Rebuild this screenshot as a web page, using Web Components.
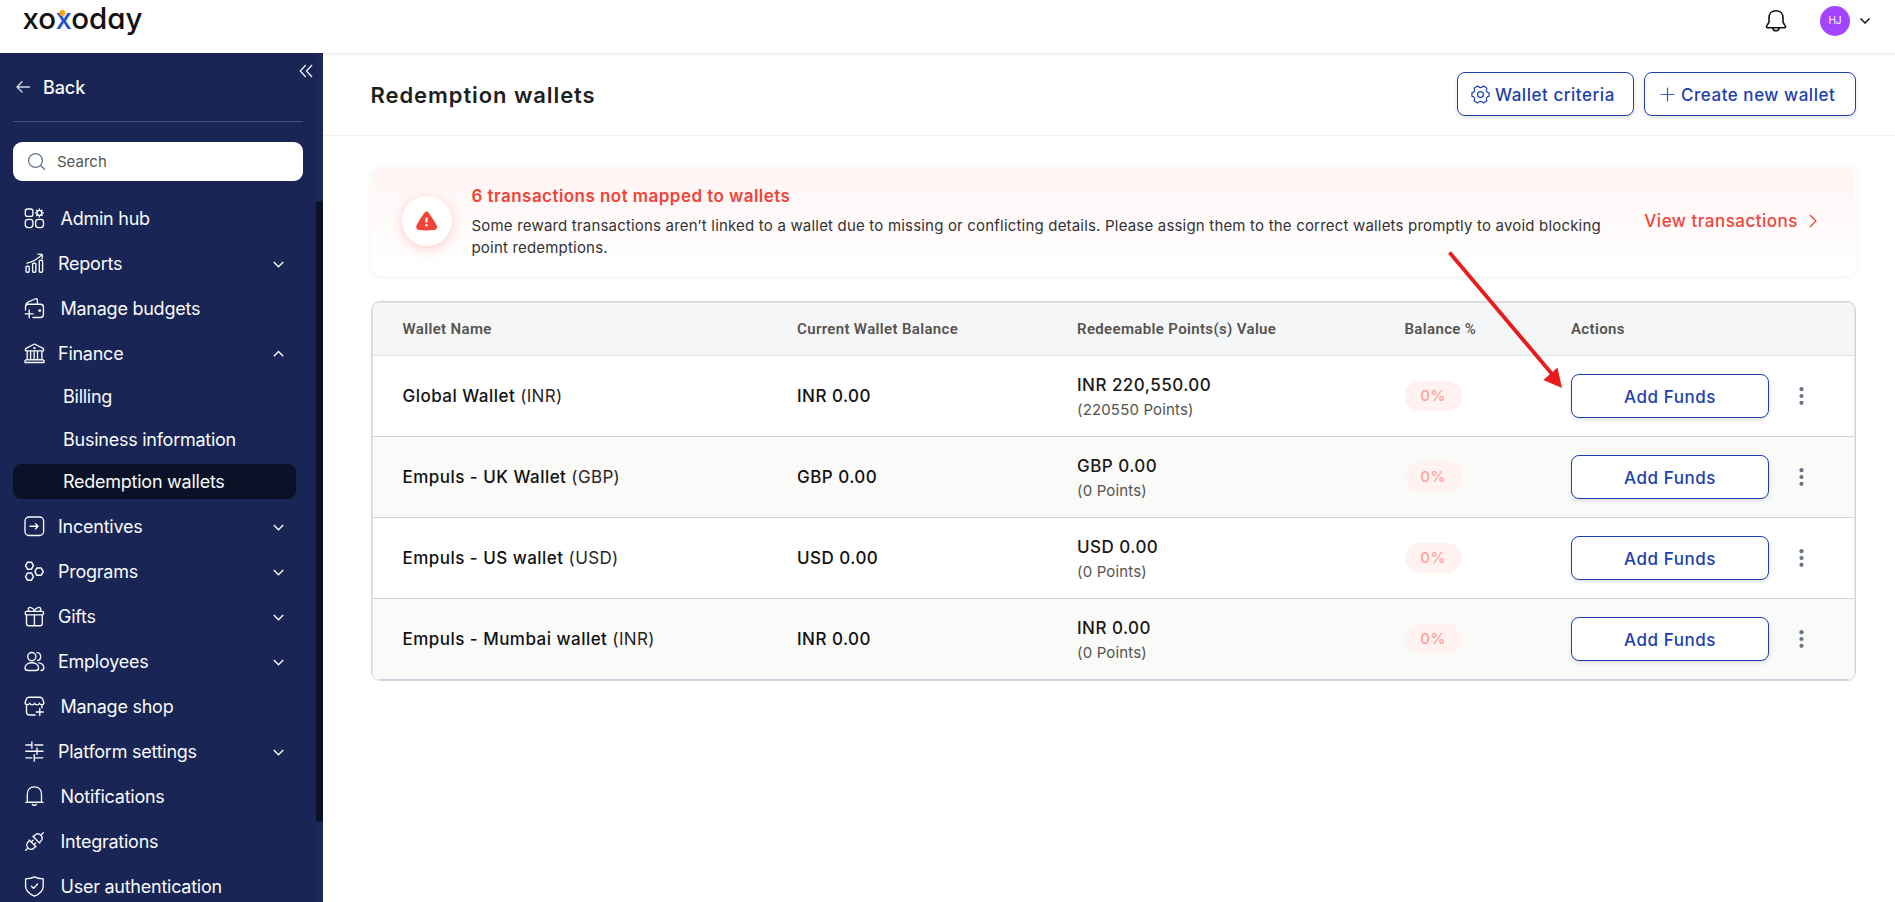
<!DOCTYPE html>
<html lang="en">
<head>
<meta charset="utf-8">
<title>Redemption wallets</title>
<style>
body{
  margin:0;
  height:902px;
  overflow:hidden;
  background:#fff;
  font-family:Inter,"Liberation Sans",sans-serif;
  color:#1c1917;
}
</style>
</head>
<body>
<app-shell>
  <top-bar slot="top" initials="HJ"></top-bar>
  <side-bar slot="side">
    <nav-item icon="hub">Admin hub</nav-item>
    <nav-item icon="reports" arrow="down">Reports</nav-item>
    <nav-item icon="budget">Manage budgets</nav-item>
    <nav-item icon="bank" arrow="up">Finance
      <sub-item slot="sub">Billing</sub-item>
      <sub-item slot="sub">Business information</sub-item>
      <sub-item slot="sub" active>Redemption wallets</sub-item>
    </nav-item>
    <nav-item icon="incentive" arrow="down">Incentives</nav-item>
    <nav-item icon="programs" arrow="down">Programs</nav-item>
    <nav-item icon="gift" arrow="down">Gifts</nav-item>
    <nav-item icon="people" arrow="down">Employees</nav-item>
    <nav-item icon="shop">Manage shop</nav-item>
    <nav-item icon="sliders" arrow="down">Platform settings</nav-item>
    <nav-item icon="bell">Notifications</nav-item>
    <nav-item icon="plug">Integrations</nav-item>
    <nav-item icon="shield">User authentication</nav-item>
  </side-bar>
  <page-header>Redemption wallets
    <line-button slot="actions" icon="gear" style="width:177px">Wallet criteria</line-button>
    <line-button slot="actions" icon="plus" style="width:212px">Create new wallet</line-button>
  </page-header>
  <alert-card>
    <span slot="title">6 transactions not mapped to wallets</span>
    <span slot="text">Some reward transactions aren’t linked to a wallet due to missing or conflicting details. Please assign them to the correct wallets promptly to avoid blocking point redemptions.</span>
    <span slot="link">View transactions</span>
  </alert-card>
  <wallet-table>
    <wallet-row name="Global Wallet" currency="INR" balance="0.00" value="220,550.00" points="220550"></wallet-row>
    <wallet-row name="Empuls - UK Wallet" currency="GBP" balance="0.00" value="0.00" points="0" alt></wallet-row>
    <wallet-row name="Empuls - US wallet" currency="USD" balance="0.00" value="0.00" points="0"></wallet-row>
    <wallet-row name="Empuls - Mumbai wallet" currency="INR" balance="0.00" value="0.00" points="0" alt></wallet-row>
  </wallet-table>
</app-shell>
<pointer-arrow></pointer-arrow>

<script>
/* Icons, all on a 21x21 grid */
const Icons = {
  hub:`<rect x="1.3" y="1" width="7.6" height="7.4" rx="2.2"/><rect x="1.3" y="11.4" width="7.6" height="8.2" rx="2.8"/><rect x="11.6" y="11.4" width="7.9" height="8.2" rx="2.8"/><circle cx="15.4" cy="4.9" r="2.5"/><path d="M15.4 1v1.4M15.4 7.4v1.5M11.5 4.9h1.4M17.9 4.9h1.5M12.7 2.2l1 1M17.1 6.6l1 1M18.1 2.2l-1 1M13.7 6.6l-1 1"/>`,
  reports:`<rect x="2" y="13.2" width="3.2" height="6" rx="1"/><rect x="8.6" y="10.2" width="3.3" height="9" rx="1"/><rect x="15.3" y="7.2" width="3.3" height="12" rx="1"/><path d="M3 10.200c6.300-1.500 11-4.500 14.700-8.300M14 1.200l4.200.2v4.200"/>`,
  budget:`<path d="M1.500 12V8.800c0-1.600 1-2.600 2.600-2.600h12.300c1.900 0 3 1 3 2.800v7.500c0 2-1.200 3-3 3H9M1.600 8.500C1.600 6 2.500 5 4 4.200L11 1c1.500-.7 2.400 0 2.400 1.400v3.600M5.200 12v7.800M1.200 15.800h8"/><circle cx="15.700" cy="12.600" r=".8"/>`,
  bank:`<path d="M1.500 7.800V5.600L10.500 1l9 4.600v2.200zM1 19.500v-2l1.500-.8h16l1.500.8v2zM3.200 8v8.600M6.600 8v8.600M13.500 8v8.600M10.100 8v8.600M17.900 8v8.600"/><circle cx="10.500" cy="5.100" r=".5"/>`,
  incentive:`<rect x="1" y="1" width="18.600" height="18.500" rx="4"/><path d="M6 10.200h8M11.500 7.700l2.600 2.500-2.600 2.500"/>`,
  programs:`<path d="M3.500 1.200h4l1.900 3.500-1.900 3.500h-4L1.600 4.700zM3.500 12h4l1.900 3.600-1.900 3.600h-4l-1.900-3.600zM12.900 6.900h4.200l2.200 3.700-2.200 3.700h-4.200l-2-3.700z" stroke-width="1.500"/>`,
  gift:`<rect x="1.300" y="5.300" width="18.200" height="3.500" rx="1"/><path d="M2.500 9v8.500c0 1.500.8 2.200 2.200 2.200h11.400c1.400 0 2.200-.7 2.200-2.200V9M10.400 9v10.500M10.500 5c-1-3.600-6-5-6.300-1.800 0 .9.400 1.500 1.200 2M10.500 5c1-3.600 6-5 6.300-1.800 0 .9-.4 1.500-1.200 2"/>`,
  people:`<circle cx="7.800" cy="5.600" r="4.100"/><path d="M1 17c0-7 13.600-7 13.600 0 0 2.500-1.600 2.500-3 2.500H4c-1.400 0-3 0-3-2.500zM13 1.700c4.700.3 4.800 7 .5 7.800M15 11.800c3 .5 4.800 2.500 4.800 5 0 1.800-1 2.700-2.800 2.700"/>`,
  shop:`<path d="M1.200 6.300L2.500 2.800C3 1.500 3.700 1.200 5 1.200h11c1.300 0 2 .3 2.500 1.600l1.300 3.500c.3 2.800-3.500 3.400-4.400.8-.8 2.300-4 2.300-4.800 0-.8 2.300-4 2.300-4.800 0-1 2.600-4.900 2-4.600-.8M2.500 9.500v6.300c0 2.300 1 3.200 3.200 3.200h5.500M18 9.500v2.300M15.800 12.500v7M12.300 16h7"/>`,
  sliders:`<path d="M1.800 4h6M7.900.8v6.400M10.800 4h8M1.800 10.200h11M13 7v6.400M13 10.200h6M1.800 16.800h6M10.200 13.600v6.600M10.200 16.800h8.700"/>`,
  bell:`<path d="M3.300 16.200V8.800C3.300 3.800 6 .9 10.300.9s7.200 2.900 7.200 7.900v7.400zM1.800 16.300h17.300M8.300 18.500c.9 1 3.200 1 4.100 0"/>`,
  plug:`<g transform="rotate(-45 10.500 10.500)"><path d="M-2 10.500h3.500M19.500 10.500h3.500M7.800 5.700v9.600M7.800 6.300H6C-.2 6.300-.2 14.700 6 14.700h1.800M7.900 8.600h2.400M7.900 12.400h2.400M13 5.700v9.600M13 6.300h1.800c6.200 0 6.200 8.400 0 8.400H13"/></g>`,
  shield:`<path d="M10.500.9c2.500 1.500 5.500 1.900 8.700 2v7.300c0 4.700-3.700 7.800-8.700 10-5-2.200-8.900-5.300-8.900-10V2.900c3.200-.1 6.300-.5 8.900-2zM7.400 10.300l2.200 2.100 4-4.400"/>`,
  gear:`<path d="M19.100 8.800v3.400Q17 12.500 16.500 14q-.5 1.500.4 2.700l-3.300 2.300Q12 17.400 10.500 17.400T7.400 19l-3.300-2.300q.9-1.200.4-2.700-.5-1.500-2.600-1.800V8.800Q4 8.500 4.500 7q.5-1.500-.4-2.700L7.400 2Q9 3.600 10.500 3.600T13.600 2l3.300 2.300Q16 5.500 16.500 7q.5 1.500 2.600 1.800z"/><circle cx="10.500" cy="10.500" r="2.900"/>`,
  plus:`<path d="M10.500 4v13M4 10.500h13"/>`
};
const icon = (name, size = 21, width = 1.35) =>
  `<svg width="${size}" height="${size}" viewBox="0 0 21 21" fill="none" stroke="currentColor" stroke-width="${width}" stroke-linecap="round" stroke-linejoin="round">${Icons[name]}</svg>`;

function define(name, render){
  window.customElements.define(name, class extends HTMLElement{
    constructor(){
      super();
      this.attachShadow({mode:'open'});
    }
    connectedCallback(){
      this.shadowRoot.innerHTML = render(this);
    }
  });
}

define('app-shell', () => `
<style>
:host{display:grid;grid-template:53px 849px / 323px 1fr;}
.top{grid-column:1 / 3;position:relative;z-index:1;}
main{min-width:0;}
</style>
<div class="top"><slot name="top"></slot></div>
<slot name="side"></slot>
<main><slot></slot></main>
`);

define('top-bar', el => `
<style>
:host{display:flex;justify-content:space-between;box-sizing:border-box;height:53px;padding:0 25px 0 22px;background:#fff;}
:host::after{content:"";position:absolute;left:323px;right:0;top:53px;height:4px;background:linear-gradient(#f0f0f0,#fff);}
.user{display:flex;align-items:center;height:42px;}
.avatar{width:30px;height:30px;border-radius:50%;background:#a344ff;color:#fff;font-size:10px;line-height:29px;text-align:center;margin:0 10px 0 33px;}
svg{display:block;}
</style>
<svg width="124" height="42" font-family="Inter" font-size="29.500" font-weight="480" style="font-feature-settings:'cv11'">
  <text y="29" x="0.500" textLength="120" lengthAdjust="spacing" fill="#111">xo<tspan fill="#1d4fd8">x</tspan>oday</text>
  <circle cx="40.300" cy="13" r="2.900" fill="#f5a80c"/>
</svg>
<div class="user">
  <svg width="22" height="24" viewBox="0 0 22 24" fill="none" stroke="#111" stroke-width="1.600" stroke-linejoin="round"><path d="M11 1.800c-4.500 0-7 3-7 7v4.400l-2.300 4c-.4.900 0 1.500.8 1.500h17c.8 0 1.200-.6.8-1.500l-2.300-4V8.800c0-4-2.500-7-7-7zM7.700 18.900c.6 3.900 6 3.900 6.600 0"/></svg>
  <div class="avatar">${el.getAttribute('initials')}</div>
  <svg width="10" height="8" fill="none" stroke="#111" stroke-width="1.500"><path d="M.5 1.500L5 6l4.500-4.500"/></svg>
</div>
`);

define('side-bar', () => `
<style>
:host{display:flex;background:#192554;color:#f8fafc;overflow:hidden;}
.menu{width:316px;flex:none;}
.head{display:flex;justify-content:space-between;height:68px;padding:0 3px 0 15px;}
.back{display:flex;align-items:center;gap:12px;font-size:18px;font-weight:500;letter-spacing:-.1px;}
.head > svg{margin-top:11px;}
.search{display:flex;align-items:center;gap:10px;box-sizing:border-box;width:290px;height:39px;margin:20px 0 15px 13px;padding:0 0 1px 14px;
  border-radius:9px;background:#fff;color:#57534e;font-size:15px;}
hr{width:290px;height:1px;margin:0 0 0 13px;border:0;background:#45527b;}
.scroll{width:7px;background:#1a2757;}
.thumb{height:621px;margin-top:148px;border-radius:4px;background:#0b1228;}
</style>
<div class="menu">
  <div class="head">
    <div class="back"><svg width="16" height="14" fill="none" stroke="#d3d8e6" stroke-width="1.400" stroke-linecap="round" stroke-linejoin="round"><path d="M14.500 7H2.200M7 1.800L2 7l5 5"/></svg>Back</div>
    <svg width="14" height="14" fill="none" stroke="#e8ebf5" stroke-width="1.400"><path d="M6.800 1L1.300 7l5.500 6M13 1L7.500 7l5.500 6"/></svg>
  </div>
  <hr>
  <div class="search"><svg width="20" height="20" fill="none" stroke="#64748b" stroke-width="1.300"><circle cx="8.500" cy="9.500" r="6.900"/><path d="M13.300 14.200l4.700 4.500"/></svg>Search</div>
  <slot></slot>
</div>
<div class="scroll"><div class="thumb"></div></div>
`);

define('nav-item', el => {
  const arrow = el.getAttribute('arrow');
  const path = arrow === 'up' ? 'M.8 6.200L5.500 1.500l4.700 4.700' : 'M.8 2L5.500 6.700 10.200 2';
  return `
<style>
:host{display:block;font-size:18px;font-weight:430;letter-spacing:-.25px;white-space:nowrap;}
.row{display:flex;align-items:center;height:45px;padding:0 32px 0 24px;}
.label{flex:1;padding-left:${arrow ? 13 : 15.500}px;}
.sub{display:grid;gap:7.500px;padding:3px 0 5px;}
</style>
<div class="row">${icon(el.getAttribute('icon'))}<span class="label"><slot></slot></span>
${arrow ? `<svg width="11" height="8" fill="none" stroke="currentColor" stroke-width="1.400"><path d="${path}"/></svg>` : ''}</div>
${el.querySelector('sub-item') ? '<div class="sub"><slot name="sub"></slot></div>' : ''}
`;
});

define('sub-item', () => `
<style>
:host{display:block;width:233px;height:35px;margin-left:13px;padding-left:50px;line-height:35px;border-radius:8px;}
:host([active]){background:#0b1228;}
</style><slot></slot>
`);

define('page-header', () => `
<style>
:host{display:flex;align-items:center;height:82px;padding:0 39px 0 47.500px;border-bottom:1px solid #f1f1f1;}
h1{flex:1;margin:0;padding-top:1px;font-size:22px;font-weight:570;letter-spacing:.92px;color:#1f1f1f;}
.actions{display:flex;gap:10px;}
</style>
<h1><slot></slot></h1><div class="actions"><slot name="actions"></slot></div>
`);

define('line-button', el => `
<style>
:host{display:flex;align-items:center;justify-content:center;gap:4px;box-sizing:border-box;height:44px;border:1px solid #1e40af;border-radius:8px;
  background:#fff;color:#1e40af;font-size:17px;font-weight:460;letter-spacing:.53px;white-space:nowrap;box-shadow:0 2px 4px rgba(0,0,0,.12);}
:host([icon]){justify-content:flex-start;box-sizing:border-box;padding-left:12px;}
:host([icon="plus"]){gap:3px;}
svg{flex:none;}
:host([icon="plus"]) svg{opacity:.85;}
span{padding-top:1px;}
</style>
${el.hasAttribute('icon') ? icon(el.getAttribute('icon'), 21, 1.200) : ''}<span><slot></slot></span>
`);

define('alert-card', () => `
<style>
:host{display:flex;align-items:center;box-sizing:border-box;height:110px;margin:30px 39px 25px 48px;padding:0 38px 0 30px;border:1px solid #fff;border-radius:11px;
  background:linear-gradient(#fff4f4,#fffafa 50%,#fff 90%);box-shadow:0 1px 6px rgba(0,0,0,.07);}
.badge{display:grid;place-items:center;width:50px;height:50px;border-radius:50%;background:#fff;box-shadow:0 3px 12px rgba(244,67,54,.25);}
.body{width:1140px;margin:0 auto 0 19.500px;padding-top:3px;}
.title{margin:0 0 9px;font-size:17px;font-weight:570;letter-spacing:.45px;line-height:20px;color:#f04438;}
.text{margin:0;font-size:15px;line-height:22px;letter-spacing:.19px;color:#333;}
.link{display:flex;align-items:center;gap:11px;color:#f04438;font-size:17px;font-weight:470;letter-spacing:.5px;white-space:nowrap;}
</style>
<div class="badge"><svg width="22" height="20"><path d="M8.700 1.600c1-1.500 2.900-1.500 3.900 0 2.800 3.700 5.300 8 8 12.500 1.200 2.300 0 4.600-2.300 4.900-5.300.5-10.300.5-15.300 0-2.300-.3-3.500-2.600-2.300-4.900 2.500-4.500 5-8.800 8-12.500z" fill="#f04438"/><path d="M10.500 6.500v5" stroke="#fff" stroke-width="2"/><circle cx="10.500" cy="14.200" r="1.200" fill="#fff"/></svg></div>
<div class="body"><p class="title"><slot name="title"></slot></p><p class="text"><slot name="text"></slot></p></div>
<div class="link"><slot name="link"></slot><svg width="8" height="14" fill="none" stroke="currentColor" stroke-width="1.300"><path d="M1 1l6 6-6 6"/></svg></div>
`);

const columns = 'display:grid;grid-template-columns:394.500px 280px 327.500px 166.500px 1fr;align-items:center;padding-left:29.500px;';

define('wallet-table', () => `
<style>
:host{display:block;margin:0 39px 0 48px;border:1px solid #d0d5dc;border-radius:9px;overflow:hidden;}
.inner{border:solid #e3e6eb;border-width:1px 1px 0;border-radius:8px;overflow:hidden;}
.head{${columns}height:52px;border-bottom:1px solid #dfe2e6;background:#f5f6f8;color:#57534e;font:650 15px Roboto,sans-serif;letter-spacing:.35px;}
.head i{font-style:normal;font-weight:500;}
</style>
<div class="inner">
  <div class="head"><span>Wallet Name</span><span>Current Wallet Balance</span><span>Redeemable Points(s) Value</span><span>Balance <i>%</i></span><span>Actions</span></div>
  <slot></slot>
</div>
`);

define('wallet-row', el => {
  const get = name => el.getAttribute(name);
  return `
<style>
:host{${columns}height:80px;border-bottom:1px solid #cbd5e1;font-size:17px;font-weight:460;letter-spacing:.47px;white-space:nowrap;color:#111;}
:host([alt]){background:#fafaf9;}
.cur{font-weight:400;letter-spacing:.35px;color:#292524;}
.value{padding-top:2px;line-height:24px;color:#1c1917;}
small{display:block;padding-top:1px;font-size:15px;font-weight:400;letter-spacing:.16px;color:#57534e;}
.pill{justify-self:start;width:57px;height:30px;border-radius:15px;background:#fff2f1;color:#fd9f99;font-size:15px;line-height:30px;text-align:center;}
.actions{display:flex;align-items:center;gap:29.500px;}
line-button{width:198px;}
</style>
<span>${get('name')} <span class="cur">(${get('currency')})</span></span>
<span>${get('currency')} ${get('balance')}</span>
<span class="value">${get('currency')} ${get('value')}<small>(${get('points')} Points)</small></span>
<span class="pill">0%</span>
<div class="actions"><line-button>Add Funds</line-button><svg width="5" height="20" fill="#64748b"><circle cx="2.500" cy="3.200" r="2.100"/><circle cx="2.500" cy="10" r="2.100"/><circle cx="2.500" cy="16.800" r="2.100"/></svg></div>
`;
});

/* Callout arrow laid over the page */
define('pointer-arrow', () => `
<style>
:host{position:absolute;left:1440px;top:245px;}
svg{display:block;}
</style>
<svg width="130" height="150" fill="#e81c1c"><path d="M9.500 7.500L112 129" stroke="#e81c1c" stroke-width="3.800"/><path d="M122 143l-18.700-8 14.200-12.500z"/></svg>
`);
</script>
</body>
</html>
